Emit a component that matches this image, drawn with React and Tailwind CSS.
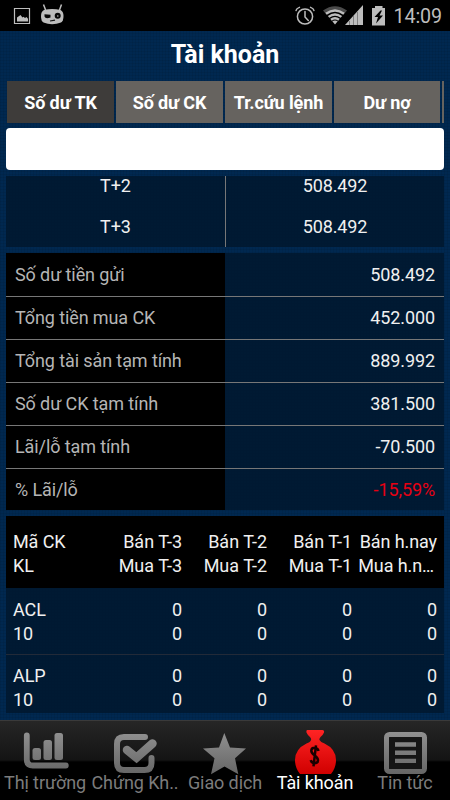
const tabs = ["Số dư TK", "Số dư CK", "Tr.cứu lệnh", "Dư nợ"];

const balances = [
  ["Số dư tiền gửi", "508.492"],
  ["Tổng tiền mua CK", "452.000"],
  ["Tổng tài sản tạm tính", "889.992"],
  ["Số dư CK tạm tính", "381.500"],
  ["Lãi/lỗ tạm tính", "-70.500"],
  ["% Lãi/lỗ", "-15,59%"],
];

const stocks = ["ACL", "ALP"];

function StatusBar() {
  return (
    <header className="flex h-[31px] shrink-0 bg-black">
      <svg width="450" height="31" viewBox="0 0 450 31" fill="#bdbdbd">
        <path d="M14.5 8.5h15v15h-15z" fill="none" stroke="#bdbdbd" strokeWidth="1.2" />
        <path d="M17 21.500v-4l3.500-2.500 2 2.500 1-.7 1.500 1.200 1.500-1 1.500 1.800v2.700z" />
        <path d="M43.500 4.500l2.300 6M61.500 4.500l-2.200 6" stroke="#bdbdbd" strokeWidth="1.500" />
        <path d="M44 10Q52 8 60.500 10Q63.500 11.500 63.500 16Q63.500 21 61 22.500Q52 26 43.500 22.500Q41 21 41 16Q41 11.500 44 10z" />
        <path d="M44.500 14.300l6 .5v2.800q-5 1.800-6-1z" fill="#080808" />
        <circle cx="57.700" cy="15.700" r="3" fill="#080808" />
        <path d="M50 21l5-.8" stroke="#151515" strokeWidth="1.200" />
        <circle cx="57.800" cy="16" r=".8" />
        <g fill="none" stroke="#bdbdbd" strokeLinecap="round">
          <circle cx="305" cy="16.500" r="7.600" strokeWidth="1.500" />
          <path d="M305 11.500v5.500l3.300 3.500" strokeWidth="1.500" />
          <path d="M296 10.500Q296.500 8.200 299.500 7.300M314 10.500Q313.500 8.200 310.500 7.300" strokeWidth="1.400" />
        </g>
        <path d="M323 10.500Q335 2 347 10.500L344.500 13.500Q335 6.500 325.500 13.500z" fill="#4a4a4a" />
        <g fill="none" stroke="#bdbdbd" strokeWidth="2.400">
          <path d="M326 13.800Q335 7 344 13.800" />
          <path d="M328.600 16.900Q335 12 341.400 16.900" />
          <path d="M331 19.800Q335 16.700 339 19.800" />
        </g>
        <path d="M332.300 21.300q2.700-1.600 5.400 0l-2.700 3.200z" />
        <path d="M345 25L363 5v20z" />
        <path d="M349.500 21v4M353.500 16v9M357.500 12v13" stroke="#555" strokeWidth=".6" />
        <path d="M372 8h3V6h7.500v2h2.500v17.500h-13z" />
        <path d="M380.500 10.500l-6 6.500h3.500l-2 6.500 7-8h-3.500l2.500-5z" fill="#000" />
        <text x="393.500" y="23.300" fontFamily="Roboto" fontSize="20" fontWeight="400" textLength="48.500" lengthAdjust="spacingAndGlyphs">14:09</text>
      </svg>
    </header>
  );
}

function NavIcon({ name }) {
  if (name === "chart")
    return (
      <>
        <path d="M26.800 15.500v24q0 6 6 6h33" fill="none" stroke="url(#metal)" strokeWidth="5.800" strokeLinecap="round" />
        <rect x="32.500" y="28" width="8.500" height="12" rx="2.500" />
        <rect x="43.500" y="20" width="8.500" height="20" rx="2.500" />
        <rect x="54.500" y="13" width="8.500" height="27" rx="2.500" />
      </>
    );
  if (name === "check")
    return (
      <g fill="none" stroke="url(#metal)" strokeLinecap="round">
        <path d="M55 17H34Q27 17 27 24v19q0 7 7 7h20.500q7 0 7-7v-5" strokeWidth="6" />
        <path d="M37 30l9.500 7.700L62.500 23.500" strokeWidth="8.500" />
      </g>
    );
  if (name === "star")
    return <path d="M44.300 13L50 27.500l16 1L55 38.300l3.300 16L44.500 46.500 31 54.300l3.500-16L23 28.500l16-1z" />;
  if (name === "bag")
    return (
      <>
        <path d="M37.500 10h15q2 0 1.500 2.500-1 2.500-3.500 4.500-1.500 1.500-1 3 1 2 5 3.500Q66 29 66 40q0 8-5 14H30q-5-6-5-14 0-11 11.500-16.500 4-1.500 4.500-3.500.5-1.500-1-3-2.500-2-3.500-4.500-.5-2.500 1-2.500z" fill="url(#red)" />
        <path d="M48.500 31q-.7-3-3.700-3.200-3.500 0-3.500 3 0 2.200 3.200 4.400 3.500 2.500 3.500 5 0 3-3.500 3-3-.2-3.800-3M46 25.300l-2.500 21" fill="none" stroke="#190000" strokeWidth="2.500" />
      </>
    );
  return (
    <>
      <rect x="26.500" y="14.500" width="38" height="37" rx="3" fill="#151515" stroke="url(#metal)" strokeWidth="5" />
      <path d="M35 22.300h21v4.400H35zM35 30.600h21v4.400H35zM35 38.800h21v4.200H35z" />
    </>
  );
}

const nav = [
  ["chart", "Thị trường"],
  ["check", "Chứng Kh.."],
  ["star", "Giao dịch"],
  ["bag", "Tài khoản"],
  ["news", "Tin tức"],
];

function BottomNav() {
  return (
    <nav className="mt-[7px] grid h-20 shrink-0 grid-cols-5 border-t border-[#3a3a3a] bg-[linear-gradient(to_bottom,#262626_0,#141414_39px,#000_41px,#000_100%)]">
      {nav.map(([icon, label]) => (
        <div key={icon} className="flex min-w-0 flex-col items-center">
          <svg width="90" height="54" viewBox="0 1 90 54" fill="url(#metal)" className="shrink-0">
            <defs>
              <linearGradient id="metal" gradientUnits="userSpaceOnUse" x1="0" y1="12" x2="0" y2="54">
                <stop stopColor="#909090" />
                <stop offset="1" stopColor="#666" />
              </linearGradient>
              <linearGradient id="red" x1="0" y1="0" x2="0" y2="1">
                <stop stopColor="#ff2424" />
                <stop offset="1" stopColor="#d00000" />
              </linearGradient>
            </defs>
            <NavIcon name={icon} />
          </svg>
          <span className={`-mt-1 whitespace-nowrap text-[18px] leading-6 ${icon === "bag" ? "text-white" : "text-[#7c7c7c]"}`}>
            {label}
          </span>
        </div>
      ))}
    </nav>
  );
}

export default function App() {
  return (
    <div className="flex h-[800px] w-[450px] flex-col overflow-hidden bg-[#002850] bg-[repeating-linear-gradient(to_right,#00000010_0_1px,transparent_1px_3px),repeating-linear-gradient(to_bottom,#00000010_0_1px,transparent_1px_3px)] font-[Roboto,'Noto_Sans',sans-serif] text-[18px] tracking-[-0.1px] text-[#f0f0f0]">
      <StatusBar />
      <h1 className="h-[50px] shrink-0 text-center text-[25px] leading-[48px] font-bold tracking-normal text-white">Tài khoản</h1>
      <div className="ml-[7px] flex h-[42px] w-[437px] shrink-0 gap-[2px] overflow-hidden">
        {tabs.map((tab, i) => (
          <div
            key={tab}
            className={`flex shrink-0 items-center justify-center whitespace-nowrap text-[18px] font-bold text-white ${i === 3 ? "w-[106px]" : "w-[107px]"} ${i === 0 ? "bg-[#3e3c3a]" : "bg-[#66635f]"}`}
          >
            {tab}
          </div>
        ))}
        <div className="w-[2px] shrink-0 bg-[#66635f]" />
      </div>
      <div className="mx-[6px] mt-[5px] h-[42px] shrink-0 rounded bg-white" />
      <main className="mx-[6px] mt-[6px] flex flex-col gap-[6px]">
        <section className="grid h-[71px] grid-cols-[219px_1fr] overflow-hidden bg-[#001830]/90 text-center leading-[41px]">
          <div className="-mt-[11px]">
            <div>T+2</div>
            <div>T+3</div>
          </div>
          <div className="h-[71px] border-l border-[#777]">
            <div className="-mt-[11px]">508.492</div>
            <div>508.492</div>
          </div>
        </section>
        <section className="h-[257px] bg-[#001830]/90">
          {balances.map(([label, value], i) => (
            <div
              key={label}
              className={`grid grid-cols-[219px_1fr] border-[#777] ${i === 0 ? "h-[44px] border-b leading-[43px]" : i === 5 ? "h-[41px] leading-[41px]" : "h-[43px] border-b leading-[42px]"}`}
            >
              <div className="h-full bg-black pl-[9px] text-[#b5b5b5]">{label}</div>
              <div className={`h-full pr-[9px] text-right ${i === 5 ? "text-[#e60012]" : ""}`}>{value}</div>
            </div>
          ))}
        </section>
        <section className="h-[197px] bg-[#001830]/90 leading-6">
          <div className="grid h-[72px] grid-cols-[85px_85px_85px_85px_84px] bg-black pt-[14px] pl-[7px]">
            <div>Mã CK<br />KL</div>
            {["T-3", "T-2", "T-1"].map((day) => (
              <div key={day} className="pr-px text-right tracking-normal whitespace-nowrap">
                Bán {day}<br />Mua {day}
              </div>
            ))}
            <div className="text-right whitespace-nowrap">
              <div>Bán h.nay</div>
              <div className="pr-[3px]">Mua h.n…</div>
            </div>
          </div>
          {stocks.map((code, i) => (
            <div
              key={code}
              className={`grid grid-cols-[85px_85px_85px_85px_84px] pl-[7px] ${i === 0 ? "h-[66px] pt-[10px]" : "border-t border-[#222a38] pt-[9px]"}`}
            >
              <div>{code}<br />10</div>
              {[0, 1, 2, 3].map((n) => (
                <div key={n} className={`text-right ${n < 3 ? "pr-px" : ""}`}>0<br />0</div>
              ))}
            </div>
          ))}
        </section>
      </main>
      <BottomNav />
    </div>
  );
}
